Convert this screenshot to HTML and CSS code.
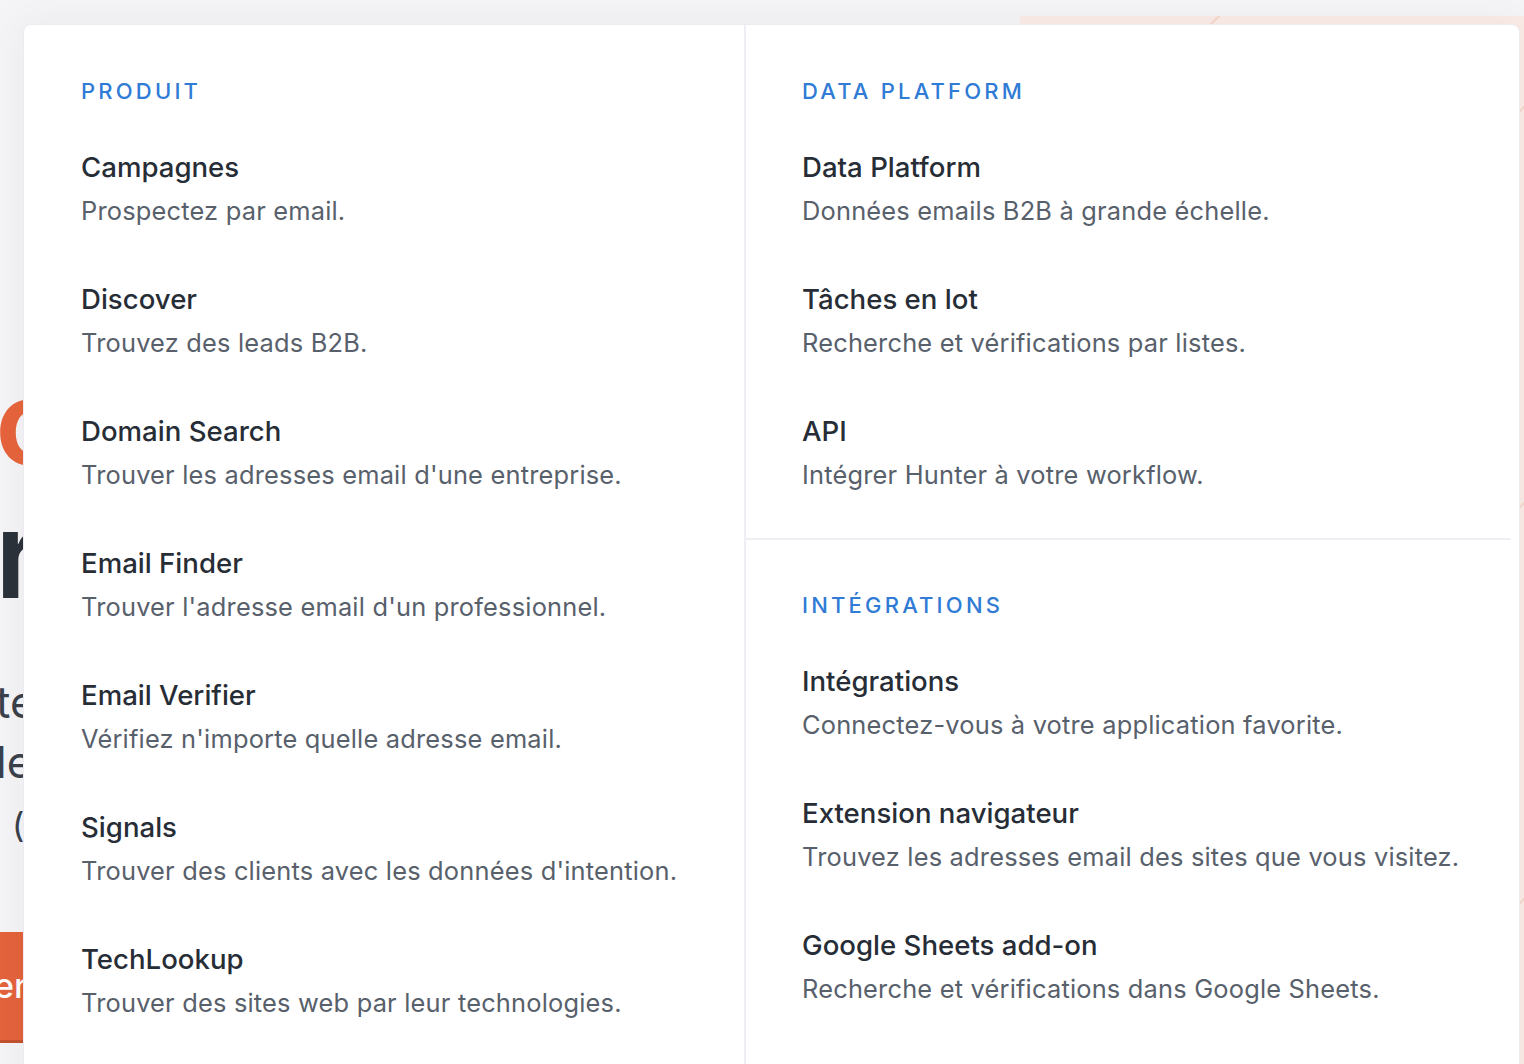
FILE: index.html
```html
<!DOCTYPE html>
<html lang="fr">
<head>
<meta charset="utf-8">
<title>Menu Produits</title>
<link rel="stylesheet" href="styles.css">
</head>
<body>
<div class="page">
  <div class="hero">
    <div class="hero-line hero-orange">co</div>
    <div class="hero-line hero-dark">r</div>
    <div class="hero-sub hero-sub-first">te</div>
    <div class="hero-sub">le</div>
    <div class="hero-small">(</div>
    <div class="hero-btn">en</div>
  </div>

  <div class="menu">
    <div class="col col-left">
      <section class="section">
        <h3 class="heading">Produit</h3>
        <a class="item"><span class="title">Campagnes</span><span class="desc">Prospectez par email.</span></a>
        <a class="item"><span class="title">Discover</span><span class="desc">Trouvez des leads B2B.</span></a>
        <a class="item"><span class="title">Domain Search</span><span class="desc">Trouver les adresses email d'une entreprise.</span></a>
        <a class="item"><span class="title">Email Finder</span><span class="desc">Trouver l'adresse email d'un professionnel.</span></a>
        <a class="item"><span class="title">Email Verifier</span><span class="desc">Vérifiez n'importe quelle adresse email.</span></a>
        <a class="item"><span class="title">Signals</span><span class="desc">Trouver des clients avec les données d'intention.</span></a>
        <a class="item"><span class="title">TechLookup</span><span class="desc">Trouver des sites web par leur technologies.</span></a>
      </section>
    </div>
    <div class="col col-right">
      <section class="section section-top">
        <h3 class="heading">Data Platform</h3>
        <a class="item"><span class="title">Data Platform</span><span class="desc">Données emails B2B à grande échelle.</span></a>
        <a class="item"><span class="title">Tâches en lot</span><span class="desc">Recherche et vérifications par listes.</span></a>
        <a class="item"><span class="title">API</span><span class="desc">Intégrer Hunter à votre workflow.</span></a>
      </section>
      <section class="section section-bottom">
        <h3 class="heading">Intégrations</h3>
        <a class="item"><span class="title">Intégrations</span><span class="desc">Connectez-vous à votre application favorite.</span></a>
        <a class="item"><span class="title">Extension navigateur</span><span class="desc">Trouvez les adresses email des sites que vous visitez.</span></a>
        <a class="item"><span class="title">Google Sheets add-on</span><span class="desc">Recherche et vérifications dans Google Sheets.</span></a>
      </section>
    </div>
  </div>
</div>
</body>
</html>
```

FILE: styles.css
```css
* { box-sizing: border-box; }
html, body { margin: 0; padding: 0; }
body {
  font-family: Inter, "Noto Sans", "DejaVu Sans", sans-serif;
  -webkit-font-smoothing: antialiased;
}
.page {
  position: relative;
  width: 1524px;
  height: 1064px;
  overflow: hidden;
  background:
    repeating-linear-gradient(135deg, transparent 0 140px, #f6d9cf 140px 141.5px, transparent 141.5px 280px) 1020px 16px / 504px 1048px no-repeat,
    linear-gradient(#fcece7, #fcece7) 1020px 16px / 504px 1048px no-repeat,
    #f5f5f7;
}

/* background hero peeking on the left */
.hero {
  width: 23px;
  overflow: hidden;
  padding-top: 357px;
  display: flex;
  flex-direction: column;
}
.hero-line {
  font-size: 120px;
  line-height: 130px;
  font-weight: 600;
  white-space: nowrap;
  letter-spacing: -2px;
}
.hero-orange { color: #e7643c; margin-left: -5px; }
.hero-dark { color: #2c323a; margin-left: -5px; margin-top: 3px; }
.hero-sub {
  font-size: 44px;
  line-height: 60px;
  color: #3a414b;
  white-space: nowrap;
  margin-left: -4px;
}
.hero-sub-first { margin-top: 52px; }
.hero-small {
  font-size: 34px;
  line-height: 60px;
  color: #3a414b;
  padding-left: 12px;
  white-space: nowrap;
  margin-top: 3px;
}
.hero-btn {
  margin-top: 77px;
  height: 111px;
  background: #e4633c;
  border-bottom: 3px solid #c4522f;
  color: #fff;
  font-size: 34px;
  line-height: 108px;
  font-weight: 500;
  white-space: nowrap;
  margin-left: -6px;
}

/* dropdown card */
.menu {
  position: absolute;
  left: 23px;
  top: 24px;
  width: 1497px;
  height: 1100px;
  background: #fff;
  border: 1px solid #ebebf1;
  border-radius: 8px;
  box-shadow: 0 0 40px 10px rgba(20, 20, 40, 0.035);
  display: flex;
}
.col-left {
  width: 722px;
  border-right: 2px solid #eeeef4;
}
.col-right {
  flex: 1;
  min-width: 0;
  padding-right: 8px;
}
.section {
  padding: 50px 57px 0;
  display: flex;
  flex-direction: column;
}
.col-right .section { padding-left: 56px; padding-right: 20px; }
.section-top {
  padding-bottom: 41px;
  border-bottom: 2px solid #eeeef4;
}
.section-bottom {
  padding-top: 49px;
}
.heading {
  margin: 0 0 38px;
  font-size: 22px;
  line-height: 32px;
  font-weight: 500;
  letter-spacing: 3.2px;
  text-transform: uppercase;
  color: #2f7bd5;
}
.item {
  display: flex;
  flex-direction: column;
  text-decoration: none;
  margin-bottom: 44px;
}
.section-top .item:last-child { margin-bottom: 0; }
.title {
  font-size: 27.6px;
  line-height: 44px;
  font-weight: 500;
  color: #272d36;
  white-space: nowrap;
}
.desc {
  font-size: 25.4px;
  line-height: 44px;
  font-weight: 400;
  color: #58606b;
  letter-spacing: 0.2px;
  white-space: nowrap;
}
```
